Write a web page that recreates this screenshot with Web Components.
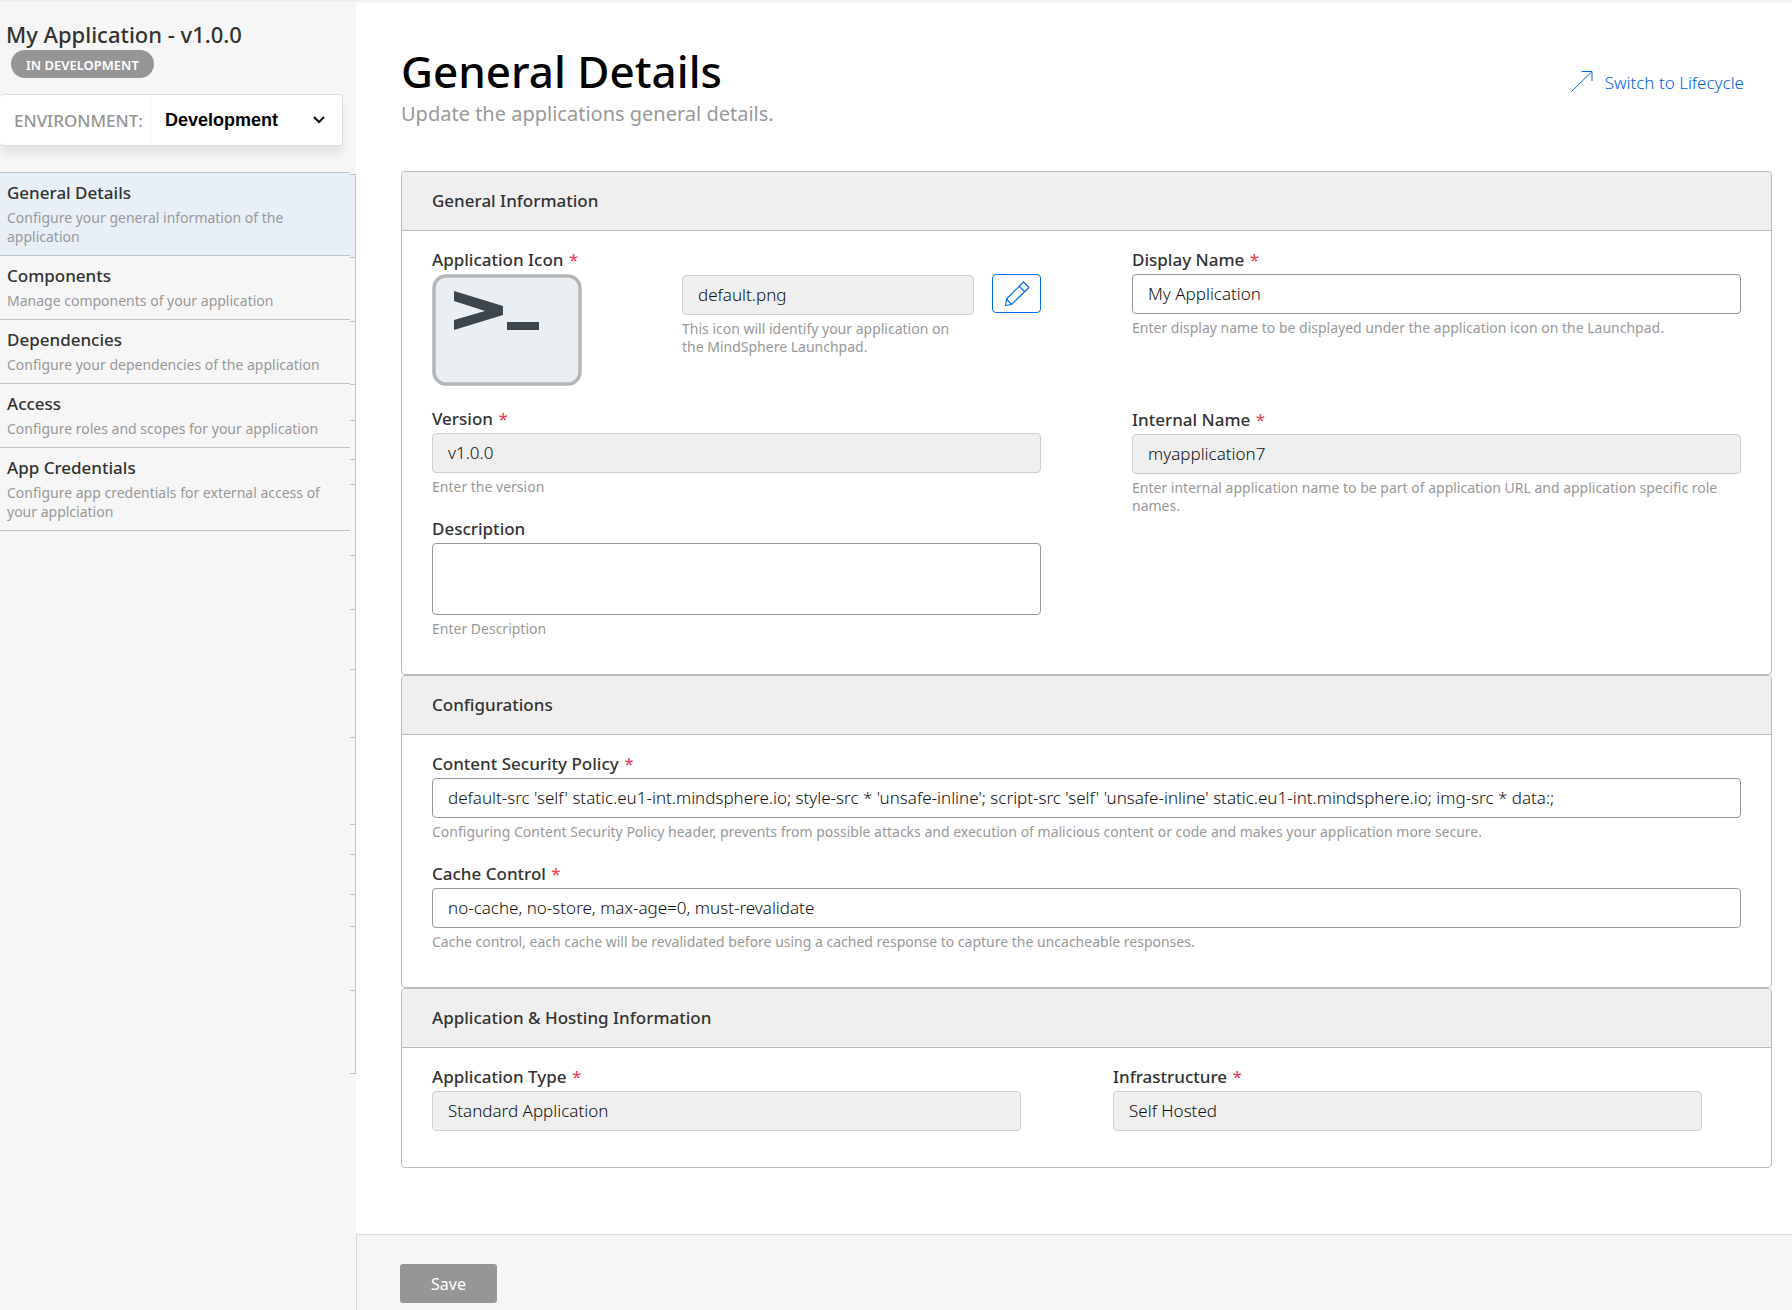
<!DOCTYPE html>
<html lang="en">
<head>
<meta charset="utf-8">
<title>General Details</title>
<style>
  body { margin: 0; background: #fff; color: #333; font-family: "Noto Sans", "Open Sans", sans-serif; }
</style>
</head>
<body>
<app-shell>
  <side-bar slot="side" name="My Application - v1.0.0" status="IN DEVELOPMENT">
    <nav-item slot="nav" active heading="General Details">Configure your general information of the application</nav-item>
    <nav-item slot="nav" heading="Components">Manage components of your application</nav-item>
    <nav-item slot="nav" heading="Dependencies">Configure your dependencies of the application</nav-item>
    <nav-item slot="nav" heading="Access">Configure roles and scopes for your application</nav-item>
    <nav-item slot="nav" heading="App Credentials">Configure app credentials for external access of your applciation</nav-item>
  </side-bar>

  <page-head heading="General Details" link="Switch to Lifecycle">Update the applications general details.</page-head>

  <info-card heading="General Information">
    <field-columns>
      <field-stack>
        <icon-field label="Application Icon" value="default.png">This icon will identify your application on the MindSphere Launchpad.</icon-field>
        <form-field label="Version" required disabled value="v1.0.0">Enter the version</form-field>
        <form-field label="Description" multiline>Enter Description</form-field>
      </field-stack>
      <field-stack loose>
        <form-field label="Display Name" required value="My Application">Enter display name to be displayed under the application icon on the Launchpad.</form-field>
        <form-field label="Internal Name" required disabled value="myapplication7">Enter internal application name to be part of application URL and application specific role names.</form-field>
      </field-stack>
    </field-columns>
  </info-card>

  <info-card heading="Configurations">
    <field-stack>
      <form-field label="Content Security Policy" required value="default-src 'self' static.eu1-int.mindsphere.io; style-src * 'unsafe-inline'; script-src 'self' 'unsafe-inline' static.eu1-int.mindsphere.io; img-src * data:;">Configuring Content Security Policy header, prevents from possible attacks and execution of malicious content or code and makes your application more secure.</form-field>
      <form-field label="Cache Control" required value="no-cache, no-store, max-age=0, must-revalidate">Cache control, each cache will be revalidated before using a cached response to capture the uncacheable responses.</form-field>
    </field-stack>
  </info-card>

  <info-card heading="Application &amp; Hosting Information">
    <field-columns inset>
      <form-field label="Application Type" required disabled value="Standard Application"></form-field>
      <form-field label="Infrastructure" required disabled value="Self Hosted"></form-field>
    </field-columns>
  </info-card>

  <action-bar slot="footer" label="Save"></action-bar>
</app-shell>

<script>
const define = (name, render) => customElements.define(name, class extends HTMLElement {
  connectedCallback() {
    if (this.shadowRoot) return;
    this.attachShadow({ mode: 'open' }).innerHTML =
      '<style>*{box-sizing:border-box}</style>' + render(this);
  }
});
const attr = (el, name) => (el.getAttribute(name) || '').replace(/&/g, '&amp;').replace(/"/g, '&quot;').replace(/</g, '&lt;');

/* Shared look of labels, text boxes and hints */
const fieldStyles = `
  :host { display: block; min-width: 0; }
  label { display: block; font-size: 17px; line-height: 24px; font-weight: 500; color: #333; }
  .req { font-weight: 400; color: #f5334d; margin-left: 1px; }
  input, textarea {
    display: block; width: 100%; height: 40px; margin: 2px 0 0; padding: 0 15px 1px;
    border: 1px solid #979797; border-radius: 4px; background: #fff; color: #111;
    font: 300 17px "Noto Sans", sans-serif; outline: none; resize: none;
  }
  textarea { height: 72px; padding: 8px 15px; }
  input:disabled { background: #efefef; border-color: #cfcfcf; color: #111; -webkit-text-fill-color: #111; opacity: 1; }
  .hint { margin-top: 5px; font-size: 14px; line-height: 18px; color: #999; }
`;
const star = '<span class="req" aria-hidden="true">*</span>';

define('app-shell', () => `
  <style>
    :host { display: grid; grid-template-columns: 356px minmax(0, 1fr); min-height: 100vh; }
    main { display: flex; flex-direction: column; box-shadow: inset 0 4px 4px -3px rgba(0,0,0,.1); }
    .content { flex: 1; padding: 45px 20px 64px 45px; }
  </style>
  <slot name="side"></slot>
  <main>
    <div class="content"><slot></slot></div>
    <slot name="footer"></slot>
  </main>`);

/* Heights of the ruled segments running down the sidebar edge */
const railSegments = [83, 64, 63, 36, 39, 25, 71, 54, 60, 68, 87, 30, 40, 32, 64, 83];

define('side-bar', el => `
  <style>
    :host { display: block; background: #f6f6f6; padding-top: 20px; box-shadow: inset 0 1px 0 #ececec; }
    h2 { margin: 0 0 2px 6px; font-size: 22px; line-height: 28px; font-weight: 500; }
    .badge {
      display: inline-block; margin-left: 11px; padding: 2px 15px 0; border-radius: 14px; background: #969696;
      color: #fff; font-size: 13px; line-height: 26px; font-weight: 600; vertical-align: top;
    }
    .env {
      display: flex; align-items: center; width: 343px; height: 52px; margin-top: 16px;
      background: #fff; border: 1px solid #dcdcdc; border-left: 0; border-radius: 4px;
      box-shadow: 0 8px 10px rgba(0,0,0,.07);
    }
    .env label { width: 151px; padding-left: 14px; font-size: 17px; font-weight: 500; color: #969696; }
    .pick { flex: 1; display: flex; align-items: center; height: 100%; padding-right: 17px; border-left: 1px solid #fafafa; }
    select {
      flex: 1; height: 100%; padding: 0 0 0 13px; border: 0; background: none; appearance: none; outline: none;
      font: bold 18px "Liberation Sans", Arial, sans-serif; color: #000;
    }
    .lower { display: flex; align-items: flex-start; margin-top: 26px; }
    nav { width: 350px; border-bottom: 1px solid #c0c3c6; }
    .rail { width: 6px; margin-top: 2px; border: solid #c0c3c6; border-width: 0 1px 1px 0; }
    .rail i { display: block; border-top: 1px solid #c0c3c6; }
    .rail i:first-child { background: #e8eff7; }
  </style>
  <h2>${attr(el, 'name')}</h2>
  <div><span class="badge">${attr(el, 'status')}</span></div>
  <div class="env">
    <label for="env">ENVIRONMENT:</label>
    <div class="pick">
      <select id="env"><option>Development</option></select>
      <svg width="12" height="8" viewBox="0 0 12 8" fill="none" stroke="#000" stroke-width="2"><path d="M1 1l5 5 5-5"/></svg>
    </div>
  </div>
  <div class="lower">
    <nav><slot name="nav"></slot></nav>
    <div class="rail">${railSegments.map(h => `<i style="height:${h}px"></i>`).join('')}</div>
  </div>`);

define('nav-item', el => `
  <style>
    :host { display: block; }
    a { display: block; border-top: 1px solid #c0c3c6; padding: 8px 24px 9px 7px; color: inherit; text-decoration: none; }
    :host([active]) a { background: #e8eff7; }
    strong { display: block; margin-bottom: 3px; font-size: 17px; line-height: 24px; font-weight: 500; }
    span { display: block; font-size: 14px; line-height: 19px; color: #999; }
  </style>
  <a href="#"><strong>${attr(el, 'heading')}</strong><span><slot></slot></span></a>`);

define('page-head', el => `
  <style>
    :host { display: flex; justify-content: space-between; align-items: flex-start; margin-bottom: 44px; }
    h1 { margin: 0 0 4px; font-size: 44px; line-height: 52px; font-weight: 500; color: #000; }
    p { margin: 0; font-size: 20px; line-height: 26px; color: #999; }
    a { display: flex; align-items: flex-start; gap: 12px; margin: 26px 28px 0 0; color: #0064e6; text-decoration: none; font-size: 17px; line-height: 24px; font-weight: 300; }
  </style>
  <div><h1>${attr(el, 'heading')}</h1><p><slot></slot></p></div>
  <a href="#"><svg width="22" height="22" viewBox="0 0 22 22" fill="none" stroke="currentColor"><path d="M.5 20.5l20.500-20M10.500.5h10.500V10"/></svg>${attr(el, 'link')}</a>`);

define('info-card', el => `
  <style>
    :host { display: block; border: 1px solid #b9b9b9; border-radius: 4px; overflow: hidden; }
    h3 { margin: 0; padding: 17px 30px; background: #efefef; border-bottom: 1px solid #b9b9b9; font-size: 17px; line-height: 24px; font-weight: 500; }
    div { padding: 17px 30px 36px; }
  </style>
  <h3>${attr(el, 'heading')}</h3>
  <div><slot></slot></div>`);

define('field-columns', () => `
  <style>
    :host { display: grid; grid-template-columns: minmax(0, 1fr) minmax(0, 1fr); gap: 91px; align-items: start; }
    :host([inset]) { padding-right: 39px; gap: 92px; }
  </style><slot></slot>`);

define('field-stack', () => `
  <style>
    :host { display: flex; flex-direction: column; gap: 21px; }
    :host([loose]) { gap: 71px; }
  </style><slot></slot>`);

define('form-field', el => {
  const off = el.hasAttribute('disabled') ? 'disabled' : '';
  const box = el.hasAttribute('multiline')
    ? '<textarea id="box"></textarea>'
    : `<input id="box" type="text" value="${attr(el, 'value')}" ${off}>`;
  return `
  <style>${fieldStyles}</style>
  <label for="box">${attr(el, 'label')} ${el.hasAttribute('required') ? star : ''}</label>
  ${box}
  ${el.textContent.trim() ? '<div class="hint"><slot></slot></div>' : ''}`;
});

define('icon-field', el => `
  <style>${fieldStyles}
    .row { display: flex; align-items: flex-start; margin-top: 2px; }
    .preview { display: block; flex: none; margin-right: 100px; }
    .file { flex: 1; min-width: 0; }
    .file input { margin-top: 1px; }
    button {
      display: flex; align-items: center; justify-content: center; flex: none; width: 49px; height: 39px;
      margin-left: 18px; padding: 0; border: 1px solid #006fe6; border-radius: 4px; background: #fff; color: #006fe6;
    }
  </style>
  <label for="box">${attr(el, 'label')} ${star}</label>
  <div class="row">
    <svg class="preview" width="150" height="112" viewBox="0 0 150 112">
      <rect x="2" y="2" width="146" height="108" rx="12" fill="#e9eff3" stroke="#b5b6b8" stroke-width="3.500"/>
      <path d="M22 17L71 32V41L22 56V46L53 37L22 27zM75 48H107V56H75z" fill="#3c464c"/>
    </svg>
    <div class="file">
      <input id="box" type="text" value="${attr(el, 'value')}" disabled>
      <div class="hint"><slot></slot></div>
    </div>
    <button type="button" aria-label="Edit icon">
      <svg width="26" height="26" viewBox="0 0 26 26" fill="none" stroke="currentColor" stroke-width="1.200" stroke-linejoin="round">
        <path d="M19.500 1l5.500 5.500L7.500 23.500 1.500 24.500 2.500 18zM15.500 5.500l5.500 5.500M2.500 18l5 5.500"/>
      </svg>
    </button>
  </div>`);

define('action-bar', el => `
  <style>
    :host { display: block; padding: 29px 43px 7px; background: #f6f6f6; border: solid #d8d8d8; border-width: 1px 0 0 1px; }
    button { display: block; width: 97px; height: 39px; border: 0; border-radius: 3px; background: #969696; color: #fff; font: 400 16px "Noto Sans", sans-serif; }
  </style>
  <button type="button">${attr(el, 'label')}</button>`);
</script>
</body>
</html>
